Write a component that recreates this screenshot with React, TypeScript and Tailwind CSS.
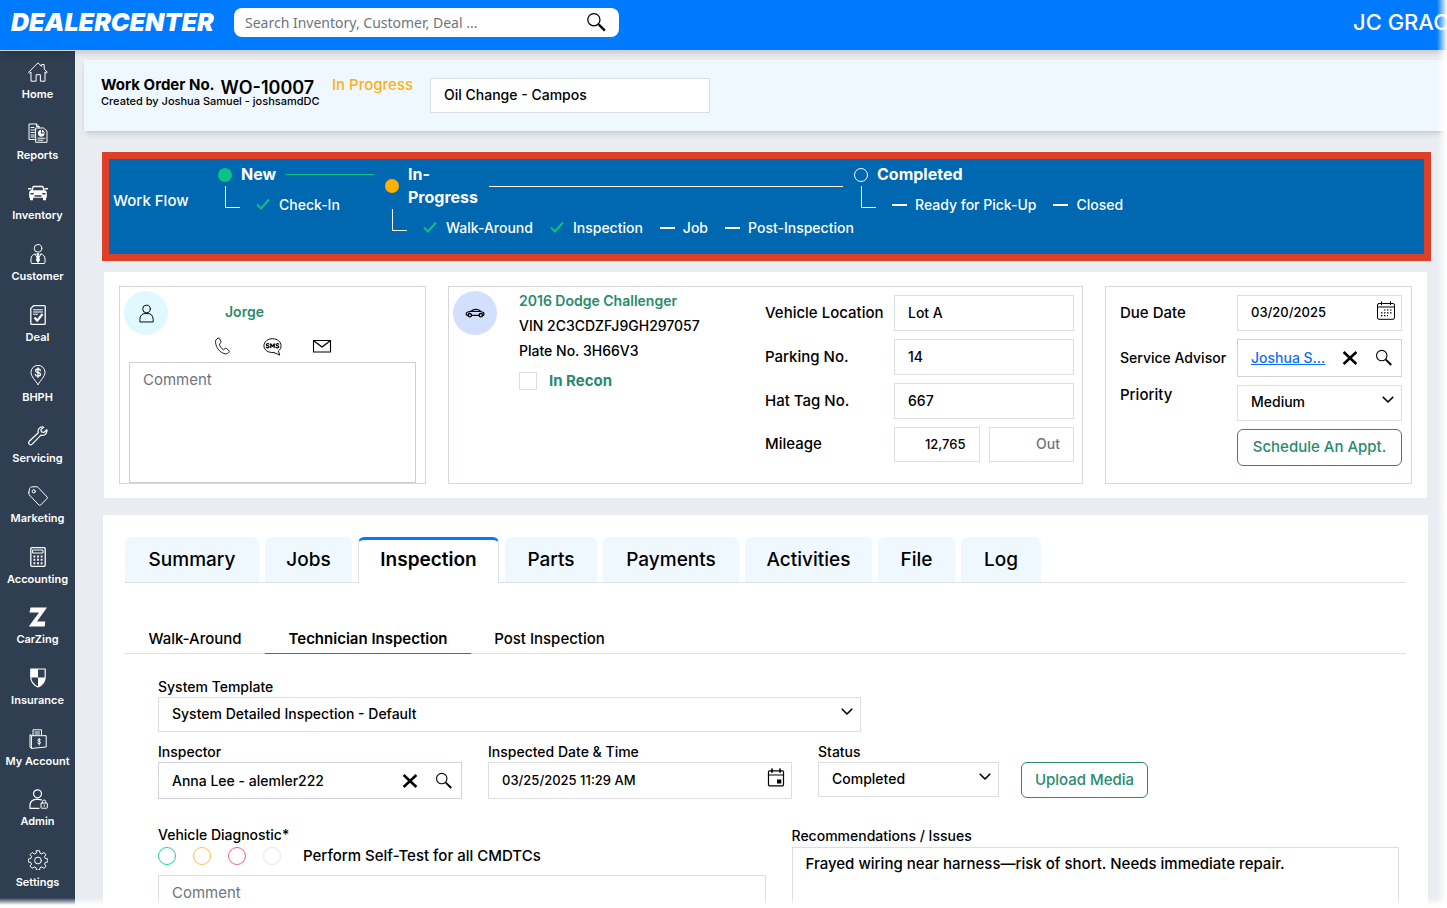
import React from 'react';
import clsx from 'clsx';

interface IconProps {
  className?: string;
  children: React.ReactNode;
}

// Line icons share a 20x20 grid
const Svg: React.FC<IconProps> = ({ className = 'h-5 w-5', children }) => (
  <svg
    viewBox="0 0 20 20"
    fill="none"
    stroke="currentColor"
    strokeWidth="1"
    strokeLinecap="round"
    strokeLinejoin="round"
    className={clsx('shrink-0', className)}
    aria-hidden="true"
  >
    {children}
  </svg>
);

const navItems: { label: string; icon: React.ReactNode }[] = [
  {
    label: 'Home',
    icon: (
      <Svg>
        <path d="M.7 10.2 10 .8l3.6 3.6V2.5h2.6v4.6l3.1 3.1-1 .9-1.3-1.2v9.3h-4.6v-6.5H8.1v6.5H3V9.9l-1.3 1.2z" />
      </Svg>
    ),
  },
  {
    label: 'Reports',
    icon: (
      <Svg>
        <path d="M8 16.5H1V1h7.5l2.5 2.5V5M8.5 1v2.5H11" />
        <path d="M3 4.5h3M3 7h4M3 9.5h3.5M3 12h3.5M3 14h3.5" />
        <path d="M8 5h7.5L19 8v11.3H8z" />
        <path d="M10 15.2h7M10 17.2h5" />
        <circle cx="13.3" cy="10.3" r="3" fill="currentColor" />
        <path d="M13.5 10V7.2M13.5 10h2.8" stroke="#2f3e50" />
      </Svg>
    ),
  },
  {
    label: 'Inventory',
    icon: (
      <Svg>
        <path d="M.5 5.800h2.300M17.200 5.800h2.300" strokeWidth="1.600" />
        <path d="M3.800 8 5.200 3.500h9.600L16.200 8" strokeWidth="1.400" />
        <path
          d="M3.500 7.300h13c1.500 0 2.300 1 2.300 2.500v5h-.8v2.400h-3v-2.400H5v2.400H2v-2.400h-.8v-5c0-1.500.8-2.500 2.300-2.500z"
          fill="currentColor"
          stroke="none"
        />
        <path d="M3 10.800h2.200M14.800 10.800H17M7 13h6" stroke="#2f3e50" strokeWidth="1.400" />
      </Svg>
    ),
  },
  {
    label: 'Customer',
    icon: (
      <Svg>
        <circle cx="10" cy="4.300" r="3.800" />
        <path d="M7 10c-2.500.6-4 2.200-4 5v3.500c0 .6.4 1 1 1h12c.6 0 1-.4 1-1V15c0-2.800-1.500-4.400-4-5" />
        <path d="M9 9.800h2l-.4 1.600.8 5-1.400 2-1.400-2 .8-5z" fill="currentColor" />
        <path d="m7 10 1.800 3M13 10l-1.800 3" />
      </Svg>
    ),
  },
  {
    label: 'Deal',
    icon: (
      <Svg>
        <path d="M5.5.7h10.800c.5 0 .9.4.9.9v16.800c0 .5-.4.9-.9.9H3.700c-.5 0-.9-.4-.9-.9V3.400z" strokeWidth="1.300" />
        <path d="M5.5 4.800h9M5.500 7h9M5.500 9.200h4" />
        <path d="m6.500 12.500 2.800 3.200L14.500 9" strokeWidth="2.200" strokeLinecap="butt" />
      </Svg>
    ),
  },
  {
    label: 'BHPH',
    icon: (
      <Svg>
        <path d="M10 19.500C7.500 15.500 3 11.500 3 7.300a7 7 0 0 1 14 0c0 4.200-4.500 8.200-7 12.200z" />
        <path
          d="M12.400 5.500c-.3-1-1.200-1.500-2.400-1.500s-2.400.5-2.400 1.700c0 2.400 5 1.200 5 3.600 0 1.200-1.200 1.800-2.600 1.800s-2.500-.6-2.700-1.700M10 2.800v9.500"
          strokeWidth="1.300"
        />
      </Svg>
    ),
  },
  {
    label: 'Servicing',
    icon: (
      <Svg>
        <path
          d="M15.800 1.200c-2.500-.9-5.300.7-5.700 3.400-.1.700 0 1.400.2 2.100l-9 8.600c-.8.9-.8 2.100 0 2.900s2.100.8 2.900 0l8.700-9c2.600.8 5.500-.9 6-3.700.1-.6.1-1.200-.1-1.800l-2.900 2.800-2.500-.6-.6-2.300z"
          strokeWidth="1.200"
        />
      </Svg>
    ),
  },
  {
    label: 'Marketing',
    icon: (
      <Svg>
        <path d="M.8 6.500 1.600 2.800C1.800 1.900 2.600 1 3.500.9L8.300.7c.7 0 1.300.2 1.800.7l9 9.600c.4.5.4 1 0 1.500l-6.600 6.600c-.5.4-1.100.4-1.500 0L1.400 9C.8 8.300.6 7.300.8 6.500z" />
        <circle cx="5.800" cy="5.300" r="1.600" />
      </Svg>
    ),
  },
  {
    label: 'Accounting',
    icon: (
      <Svg>
        <rect x="2.800" y=".7" width="14.400" height="18.600" rx="1" strokeWidth="1.300" />
        <rect x="5" y="3" width="10" height="3" />
        <path d="M5.500 9.500h9M5.500 12.800h9M5.500 16.200h9" strokeWidth="1.900" strokeDasharray="1.800 1.800" strokeLinecap="butt" />
      </Svg>
    ),
  },
  {
    label: 'CarZing',
    icon: (
      <Svg>
        <path d="M2.500.5h16.500L9 14.500h8.200l-.4 5H.8L11 5.500H1.500z" fill="currentColor" stroke="none" />
      </Svg>
    ),
  },
  {
    label: 'Insurance',
    icon: (
      <Svg>
        <path d="M2.800 1h14.400v8c0 4.600-3 8-7.200 10C5.800 17 2.800 13.600 2.800 9z" strokeWidth="1.200" />
        <path d="M2.800 1H10v8.500H2.800zM10 9.500h7.200c-.2 4.300-3 7.600-7.200 9.500z" fill="currentColor" stroke="none" />
      </Svg>
    ),
  },
  {
    label: 'My Account',
    icon: (
      <Svg>
        <path d="M5 6.500V.8h8.500v5.700M7 3h4.500M7 5h4.500" />
        <path d="M3.800 6.700h14.400V18L3.800 19.400z" />
        <path d="M3.800 6.700 2 5.500v12.600l1.800 1.300" />
        <path d="M12.500 10.700c-.4-.5-2.700-.7-2.700.7s2.800.7 2.800 2.200-2.500 1.300-3 .5M11.200 9.500v6.500" />
      </Svg>
    ),
  },
  {
    label: 'Admin',
    icon: (
      <Svg>
        <circle cx="9.500" cy="4.800" r="4" strokeWidth="1.200" />
        <path d="M11 19.300H2v-3c0-3.500 2.600-6 6-6h2.500c1.200 0 2 .2 2.800.6" strokeWidth="1.200" />
        <rect x="13" y="14" width="6.300" height="5.200" rx=".6" />
        <path d="M14.500 14v-1.300a1.600 1.600 0 0 1 3.300 0V14M16.200 16v1.200" />
      </Svg>
    ),
  },
  {
    label: 'Settings',
    icon: (
      <Svg>
        <path d="M8.500.7h3l.5 2.500 1.700.7 2.200-1.400 2.100 2.100-1.500 2.100.8 1.800 2.500.4v3l-2.500.5-.7 1.700 1.400 2.200-2.100 2-2.200-1.400-1.700.8-.5 2.400h-3l-.5-2.500-1.700-.7-2.200 1.400-2-2.100 1.400-2.100-.8-1.800L.3 12V9l2.500-.5.7-1.700-1.400-2.200 2.100-2.100 2.100 1.500L8 3.200z" />
        <circle cx="10" cy="10.500" r="3.400" />
      </Svg>
    ),
  },
];

const SearchIcon: React.FC<{ className?: string }> = ({ className }) => (
  <Svg className={className}>
    <circle cx="7.500" cy="7.300" r="5.800" strokeWidth="1.200" />
    <path d="m12 11.800 6 6" strokeWidth="2.200" strokeLinecap="butt" />
  </Svg>
);

const CloseIcon = () => (
  <Svg className="h-4 w-4">
    <path d="m2 2.500 16 15M18 2.500l-16 15" strokeWidth="3.200" strokeLinecap="butt" />
  </Svg>
);

const PersonIcon = () => (
  <Svg className="h-[19px] w-[19px]">
    <circle cx="10" cy="5.200" r="4" />
    <path d="M3 18.500v-2.200C3 12.500 5.500 10 8.500 10h3c3 0 5.500 2.500 5.500 6.300v2.200z" />
  </Svg>
);

const CarIcon = () => (
  <Svg>
    <path
      d="M3.200 12.300 1.300 12c-.3-1.500.2-2.700 1.500-3l3-.6C7.500 6.800 9 6.300 11 6.300c2.200 0 3.800.8 5.300 2.400l2 .8c.8.8.8 2 .2 2.800h-1.200M6.300 12.300h8M6 8.500h10"
      strokeWidth="1.200"
    />
    <circle cx="4.800" cy="12.200" r="1.700" strokeWidth="1.300" />
    <circle cx="15.800" cy="12.200" r="1.700" strokeWidth="1.300" />
  </Svg>
);

const PhoneIcon = () => (
  <Svg className="h-[18px] w-[18px]">
    <path d="M4.200 1.500c-1.800.8-2.700 2.400-2.500 4.500.5 6 5.500 12 11 12.700 1.500.2 3-.4 4-1.800.5-.7.4-1.400-.2-1.900l-2.600-2.200c-.6-.5-1.300-.4-1.900.1l-1.400 1.300C8.300 13 6.500 10.500 6 8l1.300-1.300c.5-.5.6-1.200.3-1.800L6.200 2c-.4-.7-1.200-.9-2-.5z" />
  </Svg>
);

const SmsIcon = () => (
  <Svg className="h-[19px] w-[19px]">
    <path d="M11 16.300c-5.500.5-10-2.500-10-7 0-4.300 4-7.500 9-7.500s9 3.200 9 7.500c0 2.300-1.100 4.200-2.800 5.500l1.300 3.900z" />
    <path
      d="M6.300 7.500c-.8-.8-2.800-.5-2.800.6 0 1.400 2.900.7 2.900 2.200 0 1.200-2.100 1.400-3 .5M8.200 11.300V7.200l1.800 2.600 1.800-2.600v4.100M16.500 7.500c-.8-.8-2.800-.5-2.800.6 0 1.400 2.900.7 2.900 2.200 0 1.200-2.100 1.400-3 .5"
      strokeWidth="1.300"
    />
  </Svg>
);

const MailIcon = () => (
  <Svg>
    <path d="M1.500 4.500h17v11.500h-17z" strokeWidth="1.100" />
    <path d="m1.700 4.700 8.300 6.300 8.300-6.300" strokeWidth="1.300" />
  </Svg>
);

const CalendarGridIcon = () => (
  <Svg>
    <rect x="1.500" y="2.500" width="17" height="15.800" rx="1.500" />
    <path d="M1.500 6h17M5.500.8v3M14.500.8v3" />
    <path d="M8 9h8M5 11.800h11M5 14.600h7" strokeWidth="1.200" strokeDasharray="1.500 1.500" strokeLinecap="butt" />
  </Svg>
);

const CalendarIcon = () => (
  <Svg>
    <rect x="2.500" y="2.800" width="15" height="15" rx="1" strokeWidth="1.200" />
    <path d="M2.500 7h15" strokeWidth="1.200" />
    <path d="M6 1v3.200M14 1v3.200" strokeWidth="1.600" />
    <rect x="11" y="11.500" width="4.300" height="4" fill="currentColor" stroke="none" />
  </Svg>
);

const ChevronIcon = () => (
  <Svg className="pointer-events-none absolute right-1.5 top-[7px] h-4 w-4">
    <path d="m4 6.500 6 6 6-6" strokeWidth="2" />
  </Svg>
);

const StepCheck = () => (
  <svg viewBox="0 0 15 15" className="h-[15px] w-[15px] text-[#0ac282]" fill="none" stroke="currentColor" strokeWidth="2" aria-hidden="true">
    <path d="m1 6.500 4 4L13 1.500" />
  </svg>
);

const field = 'w-full border border-[#dcdee1] bg-white px-[13px] pb-0.5 font-medium text-black outline-none';
const label = 'text-sm font-medium text-black';

interface StepProps {
  title: string;
  dot: string;
  line?: string;
  titleClass?: string;
  className?: string;
  tasks: { name: string; done?: boolean }[];
}

const Step: React.FC<StepProps> = ({ title, dot, line, titleClass, className, tasks }) => (
  <li className={className}>
    <div className="flex items-center">
      <span className={clsx('h-3.5 w-3.5 shrink-0 rounded-full', dot)} />
      <span className={clsx('ml-[9px] text-base font-bold leading-[23px]', titleClass)}>{title}</span>
      {line && <span className={clsx('ml-2.5 mr-[11px] h-px flex-1', line)} />}
    </div>
    <div className="flex">
      <span className="ml-[7px] h-[22px] w-[15px] shrink-0 border-b border-l border-white" />
      <ul className="ml-4 mt-[9px] flex gap-[17px] whitespace-nowrap text-sm font-medium leading-5">
        {tasks.map((task) => (
          <li key={task.name} className="flex items-center gap-2">
            {task.done ? <StepCheck /> : <span className="h-0.5 w-[15px] bg-white" />}
            {task.name}
          </li>
        ))}
      </ul>
    </div>
  </li>
);

const tabs = [
  { name: 'Summary', width: 'w-[134px]' },
  { name: 'Jobs', width: 'w-[87px]' },
  { name: 'Inspection', width: 'w-[141px]' },
  { name: 'Parts', width: 'w-[92px]' },
  { name: 'Payments', width: 'w-[136px]' },
  { name: 'Activities', width: 'w-[127px]' },
  { name: 'File', width: 'w-[77px]' },
  { name: 'Log', width: 'w-[80px]' },
];

const subTabs = [
  { name: 'Walk-Around', width: 'w-[140px]' },
  { name: 'Technician Inspection', width: 'w-[206px]' },
  { name: 'Post Inspection', width: 'w-[157px]' },
];

const ratings = [
  { name: 'Good', color: 'border-[#19d49a]' },
  { name: 'Fair', color: 'border-[#fcc145]' },
  { name: 'Poor', color: 'border-[#f9627d]' },
  { name: 'Not applicable', color: 'border-[#e4e4e4]' },
];

const Header = () => (
  <header className="z-10 flex h-[51px] shrink-0 items-start border-b border-gray-300 bg-[#007bff] pl-[11px] pt-2 shadow-md">
    <div className="w-[223px] text-[25px] font-black italic leading-[29px] text-white">DEALERCENTER</div>
    <div className="flex h-[29px] w-[385px] items-center rounded-lg bg-white pl-[11px] pr-3">
      <input
        type="text"
        aria-label="Search"
        placeholder="Search Inventory, Customer, Deal ..."
        className="min-w-0 flex-1 font-['Noto_Sans',sans-serif] text-sm text-black outline-none placeholder:text-[#6c757d]"
      />
      <button aria-label="Run search">
        <SearchIcon className="h-[21px] w-[21px]" />
      </button>
    </div>
    <div className="ml-auto w-[94px] whitespace-nowrap text-[22px] font-medium leading-[29px] text-white">JC GRAC</div>
  </header>
);

const Sidebar = () => (
  <nav className="flex w-[75px] shrink-0 flex-col bg-[#2f3e50] pb-2 pt-px text-white">
    {navItems.map((item) => (
      <a key={item.label} href="#" className="flex flex-1 flex-col items-center justify-center gap-1 whitespace-nowrap">
        {item.icon}
        <span className="text-[11px] font-semibold leading-4">{item.label}</span>
      </a>
    ))}
  </nav>
);

const OrderHeader = () => (
  <section className="ml-[9px] mt-[9px] flex h-[71px] bg-[#f0f8ff] pl-[17px] shadow-md">
    <div className="w-[231px] shrink-0 whitespace-nowrap pt-[15px]">
      <h1 className="flex h-5 items-start gap-1.5 leading-5">
        <span className="text-[15px] font-bold">Work Order No.</span>
        <span className="pt-[3px] text-lg font-semibold leading-5">WO-10007</span>
      </h1>
      <p className="text-[11px] font-medium leading-3">Created by Joshua Samuel - joshsamdDC</p>
    </div>
    <span className="w-[98px] shrink-0 pt-[15px] text-[15px] font-medium leading-5 text-[#ffb012]">In Progress</span>
    <input aria-label="Work order title" defaultValue="Oil Change - Campos" className={clsx(field, 'mt-[18px] h-[35px] max-w-[280px] text-sm')} />
  </section>
);

const WorkFlow = () => (
  <section className="ml-[27px] mr-4 mt-[21px] flex h-[109px] items-start border-[7px] border-[#dd3f27] bg-[#0067b1] pl-1 pt-1 text-white">
    <h2 className="w-[105px] shrink-0 pt-[26px] text-[15px] font-medium leading-[23px]">Work Flow</h2>
    <ol className="flex">
      <Step className="w-[167px] shrink-0" title="New" dot="bg-[#0ac282]" line="bg-[#0ac282]" tasks={[{ name: 'Check-In', done: true }]} />
      <Step
        className="w-[469px] shrink-0"
        title="In-Progress"
        titleClass="w-[71px]"
        dot="bg-[#ffb000]"
        line="bg-white"
        tasks={[{ name: 'Walk-Around', done: true }, { name: 'Inspection', done: true }, { name: 'Job' }, { name: 'Post-Inspection' }]}
      />
      <Step title="Completed" dot="border border-white" tasks={[{ name: 'Ready for Pick-Up' }, { name: 'Closed' }]} />
    </ol>
  </section>
);

const CustomerCard = () => (
  <div className="flex flex-col border border-[#d5d7da]">
    <div className="flex pl-1 pt-1">
      <div className="flex h-11 w-11 items-center justify-center rounded-full bg-[#e0f8ff]">
        <PersonIcon />
      </div>
      <div className="ml-[46px] w-[118px] pt-[11px]">
        <a href="#" className="block pl-[11px] text-sm font-semibold leading-5 text-[#288b6c]">Jorge</a>
        <div className="mt-3.5 flex h-5 items-center justify-between">
          <button aria-label="Call"><PhoneIcon /></button>
          <button aria-label="Send SMS"><SmsIcon /></button>
          <button aria-label="Send mail"><MailIcon /></button>
        </div>
      </div>
    </div>
    <textarea
      aria-label="Customer comment"
      placeholder="Comment"
      className="mx-[9px] mt-1.5 flex-1 resize-none border border-[#cdd0d5] px-[13px] py-1.5 text-[15px] outline-none placeholder:text-[#6c757d]"
    />
  </div>
);

const VehicleCard = () => (
  <div className="flex justify-between border border-[#d5d7da] pr-2">
    <div className="flex pl-1">
      <div className="mt-1 flex h-11 w-11 items-center justify-center rounded-full bg-[#d3dfff]">
        <CarIcon />
      </div>
      <div className="ml-[22px] pt-px text-sm font-medium leading-[25px]">
        <a href="#" className="block font-semibold text-[#288b6c]">2016 Dodge Challenger</a>
        <p>VIN 2C3CDZFJ9GH297057</p>
        <p>Plate No. 3H66V3</p>
        <label className="mt-[5px] flex items-center gap-3 text-[15px] font-bold text-[#288b6c]">
          <input type="checkbox" className="h-[18px] w-[18px] appearance-none border border-[#dcdee1] bg-white" />
          In Recon
        </label>
      </div>
    </div>
    <div className="grid h-fit w-[309px] grid-cols-[129px_1fr] items-center gap-y-2 pt-2">
      <label htmlFor="location" className="text-[15px] font-medium">Vehicle Location</label>
      <input id="location" defaultValue="Lot A" className={clsx(field, 'h-9 text-sm')} />
      <label htmlFor="parking" className="text-[15px] font-medium">Parking No.</label>
      <input id="parking" defaultValue="14" className={clsx(field, 'h-9 text-sm')} />
      <label htmlFor="hat" className="text-[15px] font-medium">Hat Tag No.</label>
      <input id="hat" defaultValue="667" className={clsx(field, 'h-9 text-sm')} />
      <label htmlFor="mileage" className="text-[15px] font-medium">Mileage</label>
      <div className="flex gap-[9px]">
        <input id="mileage" defaultValue="12,765" className={clsx(field, 'h-[35px] min-w-0 text-right text-[13px]')} />
        <input
          aria-label="Mileage out"
          placeholder="Out"
          className={clsx(field, 'h-[35px] min-w-0 text-right text-sm placeholder:text-[#6c757d]')}
        />
      </div>
    </div>
  </div>
);

const ScheduleCard = () => (
  <div className="grid h-full grid-cols-[1fr_165px] content-start gap-y-2 border border-[#d5d7da] py-2 pl-3.5 pr-[9px]">
    <label htmlFor="due" className="self-center text-[15px] font-medium">Due Date</label>
    <div className="relative">
      <input id="due" defaultValue="03/20/2025" className={clsx(field, 'h-9 text-[13px]')} />
      <button aria-label="Pick due date" className="absolute right-1.5 top-1.5"><CalendarGridIcon /></button>
    </div>
    <span className="self-center whitespace-nowrap text-sm font-medium">Service Advisor</span>
    <div className="flex h-[38px] items-center border border-[#ced2da] pl-[13px] pr-2">
      <a href="#" className="w-[91px] text-sm font-medium text-[#0d6efd] underline">Joshua S...</a>
      <button aria-label="Clear advisor"><CloseIcon /></button>
      <button aria-label="Find advisor" className="ml-auto"><SearchIcon className="h-[18px] w-[18px]" /></button>
    </div>
    <label htmlFor="priority" className="text-[15px] font-medium leading-5">Priority</label>
    <div className="relative">
      <select id="priority" className={clsx(field, 'h-9 appearance-none text-sm')}>
        <option>Medium</option>
      </select>
      <ChevronIcon />
    </div>
    <button className="col-start-2 h-[37px] whitespace-nowrap rounded-md border border-[#288b6c] text-[15px] font-medium text-[#288b6c]">
      Schedule An Appt.
    </button>
  </div>
);

const InspectionForm = () => (
  <form className="pl-[33px] pr-[7px] pt-[23px]">
    <div className="w-[703px]">
      <label htmlFor="template" className={clsx(label, 'block leading-5')}>System Template</label>
      <div className="relative">
        <select id="template" className={clsx(field, 'h-[35px] appearance-none text-sm')}>
          <option>System Detailed Inspection - Default</option>
        </select>
        <ChevronIcon />
      </div>
    </div>
    <div className="mt-2.5 flex items-start">
      <div className="w-[304px]">
        <label htmlFor="inspector" className={clsx(label, 'block leading-5')}>Inspector</label>
        <div className="flex h-[37px] items-center border border-[#ced2da] pr-2">
          <input id="inspector" defaultValue="Anna Lee - alemler222" className="min-w-0 flex-1 px-[13px] text-sm font-medium outline-none" />
          <button type="button" aria-label="Clear inspector"><CloseIcon /></button>
          <button type="button" aria-label="Find inspector" className="ml-[17px]"><SearchIcon className="h-[18px] w-[18px]" /></button>
        </div>
      </div>
      <div className="ml-[26px] w-[304px]">
        <label htmlFor="inspected" className={clsx(label, 'block leading-5')}>Inspected Date &amp; Time</label>
        <div className="relative">
          <input id="inspected" defaultValue="03/25/2025 11:29 AM" className={clsx(field, 'h-[37px] text-[13px]')} />
          <button type="button" aria-label="Pick date" className="absolute right-1.5 top-1.5"><CalendarIcon /></button>
        </div>
      </div>
      <div className="ml-[26px] w-[181px]">
        <label htmlFor="status" className={clsx(label, 'block leading-5')}>Status</label>
        <div className="relative">
          <select id="status" className={clsx(field, 'h-[35px] appearance-none text-sm')}>
            <option>Completed</option>
          </select>
          <ChevronIcon />
        </div>
      </div>
      <button type="button" className="ml-[22px] mt-5 h-9 w-[127px] rounded-md border border-[#288b6c] text-[15px] font-medium text-[#288b6c]">
        Upload Media
      </button>
    </div>
    <div className="mt-[26px] grid grid-cols-2 gap-[26px]">
      <fieldset>
        <legend className={clsx(label, 'leading-5')}>Vehicle Diagnostic*</legend>
        <div className="flex h-[30px] items-start pt-0.5">
          <div className="flex w-[145px] gap-[17px]">
            {ratings.map((rating) => (
              <input
                key={rating.name}
                type="radio"
                name="diagnostic"
                aria-label={rating.name}
                className={clsx('h-[18px] w-[18px] appearance-none rounded-full border', rating.color)}
              />
            ))}
          </div>
          <span className="text-[15px] font-medium leading-[18px]">Perform Self-Test for all CMDTCs</span>
        </div>
        <textarea
          aria-label="Diagnostic comment"
          placeholder="Comment"
          className="block h-24 w-full resize-none border border-[#dcdee1] px-[13px] py-1.5 text-[15px] outline-none placeholder:text-[#6c757d]"
        />
      </fieldset>
      <div>
        <label htmlFor="issues" className={clsx(label, 'block leading-[22px]')}>Recommendations / Issues</label>
        <textarea
          id="issues"
          defaultValue="Frayed wiring near harness—risk of short. Needs immediate repair."
          className="block h-32 w-full resize-none border border-[#dcdee1] px-[13px] py-[5px] text-[15px] font-medium outline-none"
        />
      </div>
    </div>
  </form>
);

export default function App() {
  return (
    <div className="relative flex h-screen flex-col overflow-hidden bg-[#e9edf2] font-['Inter',sans-serif] text-black">
      <Header />
      <div className="flex min-h-0 flex-1">
        <Sidebar />
        <main className="min-w-0 flex-1 overflow-hidden">
          <OrderHeader />
          <WorkFlow />
          <section className="ml-[29px] mr-5 mt-[11px] grid h-[226px] grid-cols-[307px_1fr_307px] gap-[22px] bg-white px-[15px] py-3.5">
            <CustomerCard />
            <VehicleCard />
            <ScheduleCard />
          </section>
          <section className="ml-7 mr-[19px] mt-[17px] bg-white px-[22px] pb-10 pt-[22px]">
            <div role="tablist" className="flex h-[46px] gap-1.5 border-b border-[#dee2e6]">
              {tabs.map(({ name, width }) => (
                <button
                  key={name}
                  role="tab"
                  className={clsx(
                    'rounded-t-md text-[19px]',
                    width,
                    name === 'Inspection'
                      ? '-mb-px border-x border-t-[3px] border-x-[#dee2e6] border-t-[#007bff] bg-white pb-0.5 font-semibold'
                      : 'bg-[#f0f8ff] pt-0.5 font-medium',
                  )}
                >
                  {name}
                </button>
              ))}
            </div>
            <div role="tablist" className="mt-[41px] flex h-[30px] border-b border-[#dee2e6]">
              {subTabs.map(({ name, width }) => (
                <button
                  key={name}
                  role="tab"
                  className={clsx(
                    '-mb-px whitespace-nowrap border-b pt-0.5 text-[15px]',
                    width,
                    name === 'Technician Inspection' ? 'border-[#007bff] font-semibold' : 'border-transparent font-medium',
                  )}
                >
                  {name}
                </button>
              ))}
            </div>
            <InspectionForm />
          </section>
        </main>
      </div>
      {/* soft white edges on the right and the bottom */}
      <div className="pointer-events-none absolute inset-y-0 right-0 z-20 w-2.5 bg-linear-to-r from-white/0 to-white" />
      <div className="pointer-events-none absolute inset-x-0 bottom-0 z-20 h-2.5 bg-linear-to-b from-white/0 to-white to-70%" />
    </div>
  );
}
